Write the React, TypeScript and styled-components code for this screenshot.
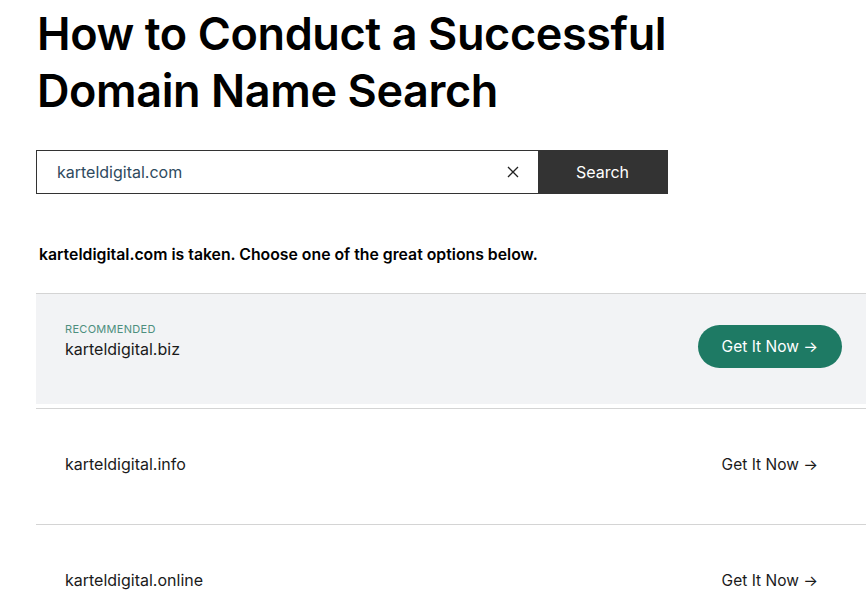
import * as React from "react";
import styled, { createGlobalStyle } from "styled-components";

const GlobalStyle = createGlobalStyle`
  html, body {
    margin: 0;
    padding: 0;
    background: #ffffff;
    overflow: hidden;
  }
  body {
    font-family: "Inter", "Liberation Sans", sans-serif;
    color: #000000;
  }
`;

const Page = styled.div`
  padding: 5px 0 0 36px;
  width: 830px;
`;

const Heading = styled.h1`
  margin: 0 0 0 1px;
  font-size: 45px;
  line-height: 57px;
  font-weight: 600;
  letter-spacing: -0.4px;
  color: #000000;
  width: 660px;
`;

const SearchForm = styled.form`
  display: flex;
  width: 632px;
  height: 44px;
  margin-top: 31px;
  box-sizing: border-box;
  border: 1px solid #333333;
`;

const SearchInput = styled.input`
  flex: 1;
  border: none;
  outline: none;
  padding: 0 0 0 20px;
  font-family: "Inter", "Liberation Sans", sans-serif;
  font-size: 16px;
  color: #2e4a5e;
  background: transparent;
`;

const ClearButton = styled.button`
  width: 50px;
  border: none;
  background: transparent;
  display: flex;
  align-items: center;
  justify-content: center;
  padding: 0;
  color: #222222;
`;

const SearchButton = styled.button`
  width: 129px;
  border: none;
  background: #333333;
  color: #ffffff;
  font-family: "Inter", "Liberation Sans", sans-serif;
  font-size: 16px;
  font-weight: 400;
`;

const Message = styled.p`
  margin: 51px 0 28px 3px;
  font-size: 15.8px;
  font-weight: 600;
  color: #000000;
  line-height: 20px;
`;

const List = styled.ul`
  list-style: none;
  margin: 0;
  padding: 0;
  width: 830px;
`;

const Item = styled.li`
  border-top: 1px solid #d4d4d4;
  padding-bottom: 4px;

  & + & {
    padding-bottom: 5px;
  }
`;

const ItemBody = styled.div<{ $featured?: boolean }>`
  display: flex;
  align-items: center;
  justify-content: space-between;
  height: 110px;
  padding: 0 24px 0 29px;
  background: ${(p) => (p.$featured ? "#f2f3f5" : "transparent")};
`;

const DomainInfo = styled.div`
  display: flex;
  flex-direction: column;
`;

const Badge = styled.span`
  font-size: 11px;
  letter-spacing: 0.3px;
  color: #4d8f7e;
  line-height: 14px;
  margin-top: -17px;
  margin-bottom: 3px;
`;

const DomainName = styled.span`
  font-size: 16px;
  color: #1a1a1a;
  line-height: 20px;
`;

const GetButton = styled.button<{ $primary?: boolean }>`
  display: flex;
  align-items: center;
  height: 43px;
  margin-top: ${(p) => (p.$primary ? "-5px" : "0")};
  padding: 0 24px;
  border: none;
  border-radius: 22px;
  background: ${(p) => (p.$primary ? "#1e7a64" : "transparent")};
  color: ${(p) => (p.$primary ? "#ffffff" : "#1a1a1a")};
  font-family: "Inter", "Liberation Sans", sans-serif;
  font-size: 15.5px;
`;

const domains = [
  { name: "karteldigital.biz", recommended: true },
  { name: "karteldigital.info", recommended: false },
  { name: "karteldigital.online", recommended: false },
];

const CloseIcon = () => (
  <svg width="12" height="12" viewBox="0 0 12 12" fill="none">
    <path d="M1 1 L11 11 M11 1 L1 11" stroke="currentColor" strokeWidth="1.3" />
  </svg>
);

const App: React.FunctionComponent = () => {
  return (
    <>
      <GlobalStyle />
      <Page>
        <Heading>How to Conduct a Successful Domain Name Search</Heading>
        <SearchForm onSubmit={(e) => e.preventDefault()}>
          <SearchInput defaultValue="karteldigital.com" />
          <ClearButton type="button">
            <CloseIcon />
          </ClearButton>
          <SearchButton type="submit">Search</SearchButton>
        </SearchForm>
        <Message>
          karteldigital.com is taken. Choose one of the great options below.
        </Message>
        <List>
          {domains.map((d) => (
            <Item key={d.name}>
              <ItemBody $featured={d.recommended}>
                <DomainInfo>
                  {d.recommended && <Badge>RECOMMENDED</Badge>}
                  <DomainName>{d.name}</DomainName>
                </DomainInfo>
                <GetButton $primary={d.recommended}>Get It Now →</GetButton>
              </ItemBody>
            </Item>
          ))}
        </List>
      </Page>
    </>
  );
};

export default App;
